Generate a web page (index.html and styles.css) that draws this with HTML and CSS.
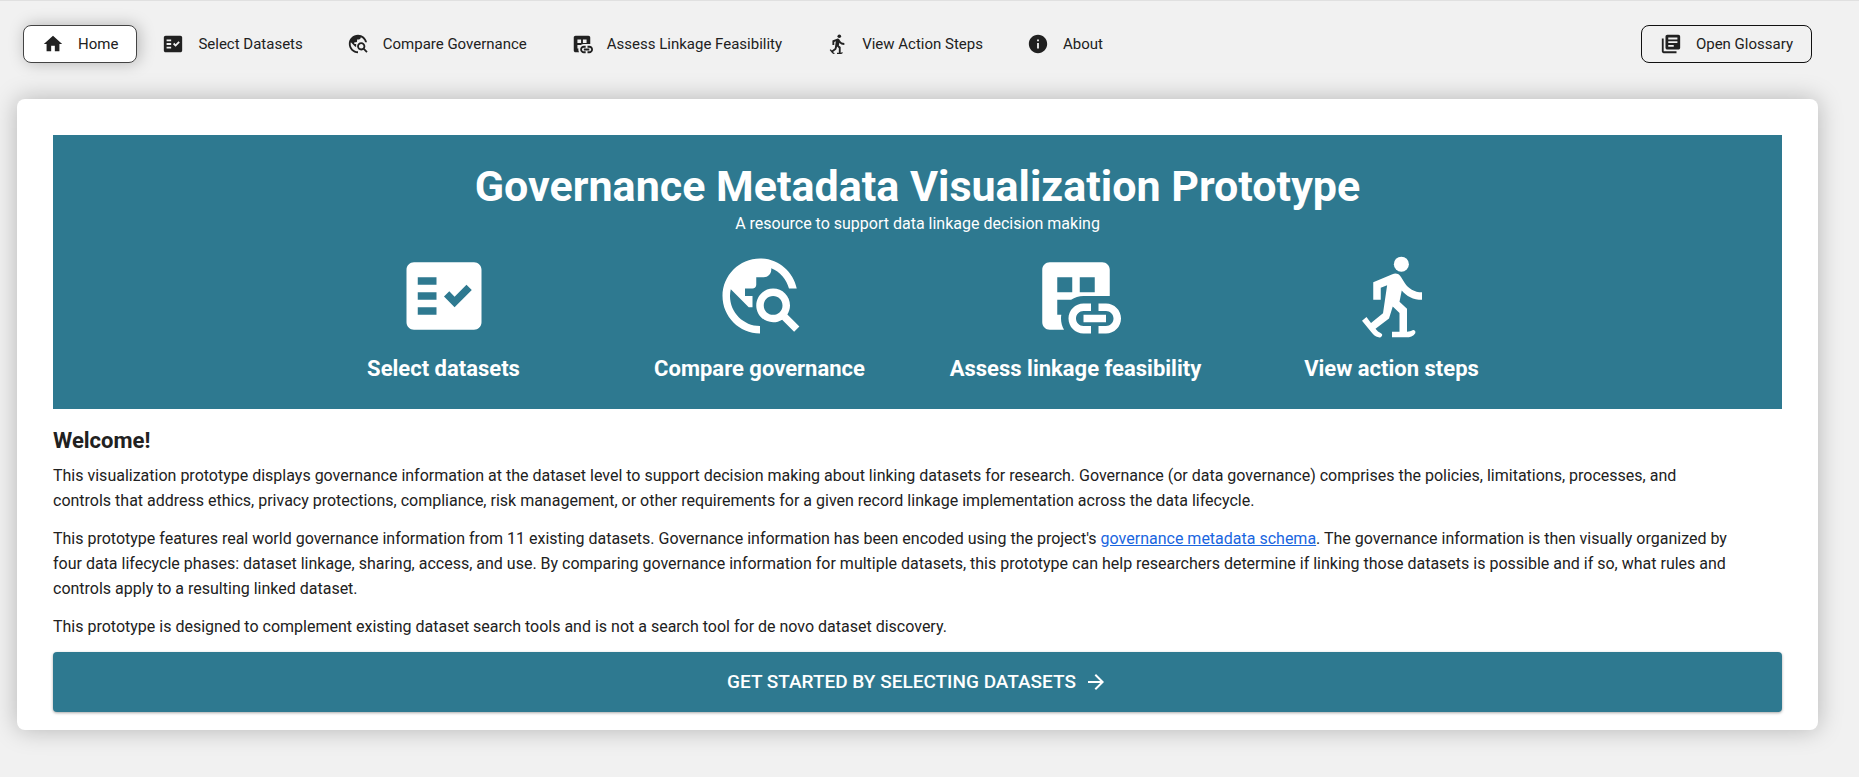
FILE: index.html
```html
<!DOCTYPE html>
<html lang="en">
<head>
<meta charset="utf-8">
<title>Governance Metadata Visualization Prototype</title>
<link rel="stylesheet" href="styles.css">
</head>
<body>
<svg class="sprite" aria-hidden="true">
  <symbol id="home" viewBox="0 0 24 24"><path d="M10 20v-6h4v6h5v-8h3L12 3 2 12h3v8z"/></symbol>
  <symbol id="fact-check" viewBox="0 0 24 24"><path d="M20 3H4c-1.100 0-2 .9-2 2v14c0 1.100.9 2 2 2h16c1.100 0 2-.9 2-2V5c0-1.100-.9-2-2-2zM10 17H5v-2h5v2zm0-4H5v-2h5v2zm0-4H5V7h5v2zm4.820 6L12 12.160l1.410-1.410 1.410 1.420L17.990 9l1.420 1.420L14.820 15z"/></symbol>
  <symbol id="explore" viewBox="0 0 24 24"><path d="M19.300 16.900c.4-.7.7-1.500.7-2.400 0-2.500-2-4.500-4.500-4.500S11 12 11 14.500s2 4.500 4.500 4.500c.9 0 1.700-.3 2.400-.7l3.200 3.200 1.400-1.400-3.200-3.200zm-3.800.1c-1.400 0-2.500-1.100-2.500-2.500s1.100-2.500 2.500-2.500 2.500 1.100 2.500 2.500-1.100 2.500-2.500 2.500zM12 20v2C6.480 22 2 17.520 2 12S6.480 2 12 2c4.840 0 8.870 3.440 9.800 8h-2.070c-.64-2.460-2.400-4.470-4.730-5.410V5c0 1.100-.9 2-2 2h-2v2c0 .55-.45 1-1 1H8v2h2v3H9l-4.790-4.790C4.080 10.790 4 11.380 4 12c0 4.410 3.590 8 8 8z"/></symbol>
  <symbol id="linked" viewBox="0 0 24 24"><path fill-rule="evenodd" d="M21 12V5c0-1.100-.9-2-2-2H5c-1.100 0-2 .9-2 2v14c0 1.100.9 2 2 2h3.810C8.300 20.120 8 19.090 8 18c0-.34.030-.67.090-1H7v-4h3.690c.95-.63 2.090-1 3.310-1h7zM7 7h4v4H7V7zm6 0h4v4h-4V7z"/><path d="M16 20h-2c-1.100 0-2-.9-2-2s.9-2 2-2h2v-2h-2c-2.210 0-4 1.790-4 4s1.790 4 4 4h2v-2zM20 14h-2v2h2c1.100 0 2 .9 2 2s-.9 2-2 2h-2v2h2c2.210 0 4-1.790 4-4s-1.790-4-4-4zM20 19v-2h-6v2h6z"/></symbol>
  <symbol id="walk" viewBox="0 0 24 24"><circle cx="14.500" cy="3.500" r="2"/><path d="M4 18.600L5.200 17.600L6.400 19.200L9.600 16.600L10.700 9.100L9 9.800V13H7V8.300L12.100 6.200C13 5.800 13.900 6.100 14.400 6.900L15.400 8.500C16.300 9.900 18 11 20 11V13C17.700 13 15.800 12 14.600 10.500L14 13.500L16 15.400V21.500C16.600 21.500 17.100 21.300 17.500 21.100C18 21 18.400 21.400 18.200 21.900C17.700 22.700 16.800 23 15.800 23H12V21.500H14V16.500L12.200 14.800L11.200 18L7.600 20.700L8.200 21.400C8.500 21.700 9 21.800 9.300 22.100C9.600 22.600 9 23.200 8.400 23C7.500 22.700 6.900 22.200 6.400 21.500Z"/></symbol>
  <symbol id="info" viewBox="0 0 24 24"><path d="M12 2C6.480 2 2 6.480 2 12s4.480 10 10 10 10-4.480 10-10S17.520 2 12 2zm1 15h-2v-6h2v6zm0-8h-2V7h2v2z"/></symbol>
  <symbol id="library" viewBox="0 0 24 24"><path d="M4 6H2v14c0 1.100.9 2 2 2h14v-2H4V6zm16-4H8c-1.100 0-2 .9-2 2v12c0 1.100.9 2 2 2h12c1.100 0 2-.9 2-2V4c0-1.100-.9-2-2-2zm-1 9H9V9h10v2zm-4 4H9v-2h6v2zm4-8H9V5h10v2z"/></symbol>
  <symbol id="arrow" viewBox="0 0 24 24"><path d="M12 4l-1.410 1.410L16.170 11H4v2h12.170l-5.580 5.590L12 20l8-8z"/></symbol>
</svg>
<header class="topbar">
  <nav class="tabs" aria-label="Main">
    <a class="tab tab-active" href="#home" aria-current="page"><svg class="icon"><use href="#home"/></svg>Home</a>
    <a class="tab" href="#select"><svg class="icon"><use href="#fact-check"/></svg>Select Datasets</a>
    <a class="tab" href="#compare"><svg class="icon"><use href="#explore"/></svg>Compare Governance</a>
    <a class="tab" href="#assess"><svg class="icon"><use href="#linked"/></svg>Assess Linkage Feasibility</a>
    <a class="tab" href="#steps"><svg class="icon"><use href="#walk"/></svg>View Action Steps</a>
    <a class="tab" href="#about"><svg class="icon"><use href="#info"/></svg>About</a>
  </nav>
  <button class="tab tab-outlined" type="button"><svg class="icon"><use href="#library"/></svg>Open Glossary</button>
</header>
<main class="card">
  <section class="banner">
    <h1 class="title">Governance Metadata Visualization Prototype</h1>
    <p class="subtitle">A resource to support data linkage decision making</p>
    <ul class="steps">
      <li class="step"><svg class="step-icon"><use href="#fact-check"/></svg>Select datasets</li>
      <li class="step"><svg class="step-icon"><use href="#explore"/></svg>Compare governance</li>
      <li class="step"><svg class="step-icon"><use href="#linked"/></svg>Assess linkage feasibility</li>
      <li class="step"><svg class="step-icon"><use href="#walk"/></svg>View action steps</li>
    </ul>
  </section>
  <section class="intro">
    <h2 class="heading">Welcome!</h2>
    <p class="text">This visualization prototype displays governance information at the dataset level to support decision making about linking datasets for research. Governance (or data governance) comprises the policies, limitations, processes, and controls that address ethics, privacy protections, compliance, risk management, or other requirements for a given record linkage implementation across the data lifecycle.</p>
    <p class="text">This prototype features real world governance information from 11 existing datasets. Governance information has been encoded using the project's <a class="link" href="#schema">governance metadata schema</a>. The governance information is then visually organized by four data lifecycle phases: dataset linkage, sharing, access, and use. By comparing governance information for multiple datasets, this prototype can help researchers determine if linking those datasets is possible and if so, what rules and controls apply to a resulting linked dataset.</p>
    <p class="text">This prototype is designed to complement existing dataset search tools and is not a search tool for de novo dataset discovery.</p>
  </section>
  <button class="start" type="button">GET STARTED BY SELECTING DATASETS<svg class="start-icon"><use href="#arrow"/></svg></button>
</main>
</body>
</html>
```
FILE: styles.css
```css
* { box-sizing: border-box; }
body {
  margin: 0;
  padding: 0 41px 32px 17px;
  background: #f1f1f1;
  border-top: 1px solid #e0e0e0;
  font-family: Roboto, "Liberation Sans", sans-serif;
  font-size: 16px;
  color: #212121;
}
.sprite { display: none; }
.topbar {
  display: flex;
  justify-content: space-between;
  padding: 24px 6px 36px;
}
.tabs { display: flex; gap: 6px; }
.tab {
  display: flex;
  align-items: center;
  gap: 14px;
  height: 38px;
  padding: 0 18px;
  border: 1px solid transparent;
  border-radius: 8px;
  background: none;
  color: inherit;
  font: 400 15px/20px Roboto, "Liberation Sans", sans-serif;
  text-decoration: none;
  white-space: nowrap;
}
.tab-active {
  background: #fff;
  border-color: #444;
  box-shadow: 2px 0 16px rgba(0, 0, 0, 0.25);
}
.tab-outlined { border-color: #111; }
.icon { width: 22px; height: 22px; fill: currentColor; }
.card {
  padding: 36px 36px 18px;
  background: #fff;
  border-radius: 8px;
  box-shadow: 0 0 24px rgba(0, 0, 0, 0.25);
}
.banner {
  padding: 24px 0;
  background: #2e7990;
  color: #fff;
  text-align: center;
}
.title { margin: 0; font-size: 43px; line-height: 54px; font-weight: 700; }
.subtitle { margin: 0; line-height: 22px; }
.steps {
  display: flex;
  justify-content: center;
  margin: 16px 0 0;
  padding: 0;
  list-style: none;
}
.step {
  display: flex;
  flex-direction: column;
  align-items: center;
  width: 316px;
  gap: 12px;
  font-size: 22px;
  line-height: 32px;
  font-weight: 700;
}
.step-icon { width: 90px; height: 90px; fill: currentColor; }
.intro { padding-right: 48px; }
.heading { margin: 16px 0 6px; font-size: 22px; line-height: 32px; font-weight: 700; }
.text { margin: 0 0 13px; line-height: 25px; }
.link { color: #1a66e0; }
.start {
  display: flex;
  align-items: center;
  justify-content: center;
  gap: 8px;
  width: 100%;
  height: 60px;
  border: 0;
  border-radius: 4px;
  background: #2e7990;
  color: #fff;
  font: 500 19px/24px Roboto, "Liberation Sans", sans-serif;
  box-shadow: 0 1px 3px rgba(0, 0, 0, 0.35);
}
.start-icon { width: 24px; height: 24px; fill: currentColor; }
```
